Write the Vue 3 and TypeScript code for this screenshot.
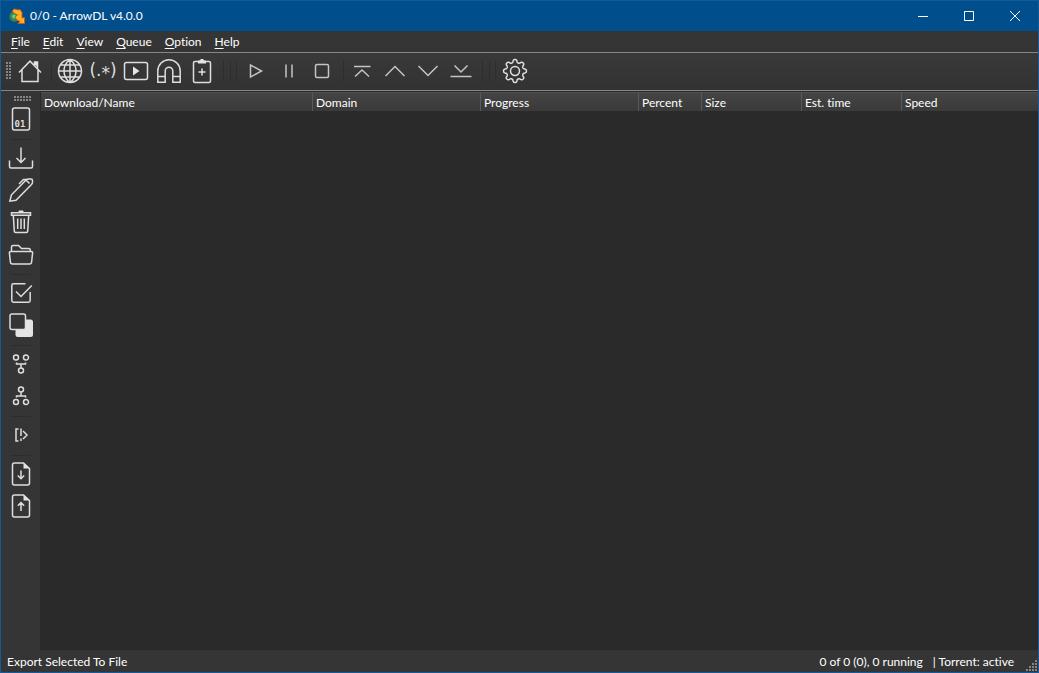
<script setup lang="ts">
interface Tool { name: string; label: string }
interface Column { title: string; cls: string }

const menus = [
  { key: 'F', rest: 'ile' },
  { key: 'E', rest: 'dit' },
  { key: 'V', rest: 'iew' },
  { key: 'Q', rest: 'ueue' },
  { key: 'O', rest: 'ption' },
  { key: 'H', rest: 'elp' },
]

const topTools: Tool[] = [
  { name: 'home', label: 'Home' },
  { name: 'sep', label: '' },
  { name: 'globe', label: 'Download web page content' },
  { name: 'regex', label: 'Download batch' },
  { name: 'video', label: 'Download video' },
  { name: 'magnet', label: 'Download torrent' },
  { name: 'clipboard', label: 'Paste URLs' },
  { name: 'break', label: '' },
  { name: 'play', label: 'Resume' },
  { name: 'pause', label: 'Pause' },
  { name: 'stop', label: 'Cancel' },
  { name: 'sep', label: '' },
  { name: 'top', label: 'Move to top' },
  { name: 'up', label: 'Move up' },
  { name: 'down', label: 'Move down' },
  { name: 'bottom', label: 'Move to bottom' },
  { name: 'break', label: '' },
  { name: 'gear', label: 'Preferences' },
]

const sideTools: Tool[] = [
  { name: 'info', label: 'Information' },
  { name: 'sep', label: '' },
  { name: 'download', label: 'Open file' },
  { name: 'pencil', label: 'Rename file' },
  { name: 'trash', label: 'Delete file' },
  { name: 'folder', label: 'Open directory' },
  { name: 'sep', label: '' },
  { name: 'check', label: 'Select all' },
  { name: 'invert', label: 'Invert selection' },
  { name: 'sep', label: '' },
  { name: 'merge', label: 'One more segment' },
  { name: 'split', label: 'One fewer segment' },
  { name: 'sep', label: '' },
  { name: 'limit', label: 'Speed limit' },
  { name: 'sep', label: '' },
  { name: 'import', label: 'Import from file' },
  { name: 'export', label: 'Export selected to file' },
]

const columns: Column[] = [
  { title: 'Download/Name', cls: 'c-name' },
  { title: 'Domain', cls: 'c-domain' },
  { title: 'Progress', cls: 'c-progress' },
  { title: 'Percent', cls: 'c-percent' },
  { title: 'Size', cls: 'c-size' },
  { title: 'Est. time', cls: 'c-time' },
  { title: 'Speed', cls: 'c-speed' },
]

// Closed outline of an eight-toothed wheel around (16, 16)
const gearPath = (() => {
  const pts: string[] = []
  for (let i = 0; i < 160; i++) {
    const a = (i / 160) * Math.PI * 2
    const r = 10 + 1.5 * Math.tanh(1.8 * Math.cos(8 * a))
    pts.push(`${(16 + r * Math.sin(a)).toFixed(2)} ${(16 - r * Math.cos(a)).toFixed(2)}`)
  }
  return `M${pts.join('L')}Z`
})()

const paths: Record<string, string> = {
  home: 'M5 17.5L16 6.2 27 17.5M8 15v11.5h16V15M20.5 10V7h3v6.5',
  globe: 'M16 4.5a11.5 11.5 0 1 0 0 23a11.5 11.5 0 1 0 0-23zM16 4.5v23M4.5 16h23M16 4.5c-8 6-8 17 0 23M16 4.5c8 6 8 17 0 23M6.5 10h19M6.5 22h19',
  video: 'M6.5 7.5h19a2 2 0 0 1 2 2v13a2 2 0 0 1-2 2h-19a2 2 0 0 1-2-2v-13a2 2 0 0 1 2-2z',
  magnet: 'M4.8 27.2V16a11.2 11.2 0 0 1 22.4 0v11.2h-7.4V16a3.8 3.8 0 0 0-7.6 0v11.2zM4.8 21.5h7.4M19.8 21.5h7.4',
  clipboard: 'M9 6.5h14a1.5 1.5 0 0 1 1.5 1.5v18a1.5 1.5 0 0 1-1.5 1.5H9A1.5 1.5 0 0 1 7.5 26V8A1.5 1.5 0 0 1 9 6.5zM16 13.5v7M12.5 17h7',
  play: 'M10.5 10v12l11-6z',
  pause: 'M13 9.5v13M19 9.5v13',
  stop: 'M11 9.5h10a1.5 1.5 0 0 1 1.5 1.5v10a1.5 1.5 0 0 1-1.5 1.5H11A1.5 1.5 0 0 1 9.5 21V11A1.5 1.5 0 0 1 11 9.5z',
  top: 'M8 11.5h16.5M9 21.5l7-6.5 7 6.5',
  up: 'M6.5 21L16 11.5l9.5 9.5',
  down: 'M6.5 11l9.5 9.5 9.5-9.5',
  bottom: 'M5.5 21.5h21M9.5 10.5l6.5 6.5 6.5-6.5',
  info: 'M9.5 5h13a2 2 0 0 1 2 2v18a2 2 0 0 1-2 2h-13a2 2 0 0 1-2-2V7a2 2 0 0 1 2-2z',
  download: 'M16 5.5v15M11.5 16l4.5 4.5 4.5-4.5M4.5 18.5v6a1.5 1.5 0 0 0 1.5 1.5h20a1.5 1.5 0 0 0 1.5-1.5v-6',
  pencil: 'M4.8 27.2L6.5 20.8 20.8 6.2Q21.8 5 23.5 5h2.5Q27.5 5 27.5 6.5v1.8q0 1.2-1 2.2L11 26.2zM24.5 9.5L20.5 5.5H18.5L14 10',
  trash: 'M6.5 6.8h19v2.5h-19zM8.3 9.3l1 16q0 1.2 1.5 1.2h10.4q1.5 0 1.5-1.2l1-16M12.7 12.5v10.5M16 12.5v10.5M19.3 12.5v10.5',
  folder: 'M6.5 13V9q0-1.5 1.5-1.5h5.5l3 3h7q1.8 0 1.8 1.5v1.5M5.8 13.5h20.4q1.5 0 1.4 1.5l-1 9q-.2 2-2 2H7.5q-1.9 0-2.1-2l-1-9q-.1-1.5 1.4-1.5z',
  check: 'M20.5 6.8H8.5Q6.8 6.8 6.8 8.5v15q0 1.7 1.7 1.7h15q1.7 0 1.7-1.7V15M11 14.5l5 5L26.8 8.5',
  merge: 'M8.5 9.5a2.5 2.5 0 1 0 5 0a2.5 2.5 0 1 0-5 0zM18.5 9.5a2.5 2.5 0 1 0 5 0a2.5 2.5 0 1 0-5 0zM13.5 22.5a2.5 2.5 0 1 0 5 0a2.5 2.5 0 1 0-5 0zM11.5 14.5v1.5h9v-1.5M16 16v4',
  split: 'M8.5 22a2.5 2.5 0 1 0 5 0a2.5 2.5 0 1 0-5 0zM18.5 22a2.5 2.5 0 1 0 5 0a2.5 2.5 0 1 0-5 0zM13.5 9.5a2.5 2.5 0 1 0 5 0a2.5 2.5 0 1 0-5 0zM11.5 17.5v-1.5h9v1.5M16 16v-4',
  limit: 'M13.5 10h-2.5v12h2.5M16 9.5v7.5M16 19.5v2.5M18 12l4 4-4 4',
  import: 'M18.5 5H9.5Q7.5 5 7.5 7v18Q7.5 27 9.5 27h13q2 0 2-2V10.5zM16 12.5v8M12.8 17.5l3.2 3.2 3.2-3.2',
  export: 'M18.5 5H9.5Q7.5 5 7.5 7v18Q7.5 27 9.5 27h13q2 0 2-2V10.5zM16 21v-8M12.8 15.8l3.2-3.2 3.2 3.2',
  gear: gearPath + 'M16 11.5a4.5 4.5 0 1 0 0 9a4.5 4.5 0 1 0 0-9z',
}

const fills: Record<string, string> = {
  home: 'M20.5 7h3v5l-3-2.5z',
  video: 'M13 11.5v9l6.5-4.5z',
  clipboard: 'M12 8.5V5.5h2l.8-1.5h2.4l.8 1.5h2v3z',
  trash: 'M13 6.5l1-2h4l1 2z',
  import: 'M18.5 5v5.5h6z',
  export: 'M18.5 5v5.5h6z',
}

const dim = new Set(['play', 'pause', 'stop', 'top', 'up', 'down', 'bottom'])
</script>

<template>
  <div class="window">
    <header class="titlebar">
      <svg class="logo" viewBox="0 0 16 16" aria-hidden="true">
        <circle cx="5.5" cy="8.5" r="4.8" fill="#179a58" stroke="#8a5a30" />
        <circle cx="5" cy="8.5" r="2" fill="#5fd08f" />
        <path d="M3.5 2.5l2-1.5L9 2l2-.5 2 3V10l2.500-.5v6H9l2-2Q7 12.500 6 9L8.500 7 4 4.500z" fill="#ffb524" stroke="#d8501c" />
      </svg>
      <h1>0/0 - ArrowDL v4.0.0</h1>
      <div class="controls">
        <button type="button" aria-label="Minimize"><svg viewBox="0 0 10 10"><path d="M0 5.5h10" /></svg></button>
        <button type="button" aria-label="Maximize"><svg viewBox="0 0 10 10"><path d="M.5.5h9v9h-9z" /></svg></button>
        <button type="button" aria-label="Close"><svg viewBox="0 0 10 10"><path d="M0 0l10 10M10 0L0 10" /></svg></button>
      </div>
    </header>

    <nav class="menubar">
      <button v-for="m in menus" :key="m.key" type="button"><u>{{ m.key }}</u>{{ m.rest }}</button>
    </nav>

    <div class="toolbar" role="toolbar" aria-label="Downloads">
      <span class="grip grip-v"></span>
      <template v-for="(t, i) in topTools" :key="i">
        <span v-if="t.name === 'sep'" class="sep"></span>
        <span v-else-if="t.name === 'break'" class="break"><i></i><i></i><i></i></span>
        <button v-else type="button" class="tool" :class="{ dim: dim.has(t.name) }" :aria-label="t.label">
          <svg viewBox="0 0 32 32">
            <text v-if="t.name === 'regex'" class="regex" x="16" y="21" text-anchor="middle">(.<tspan dy="3">*</tspan><tspan dy="-3">)</tspan></text>
            <path v-else :class="t.name" :d="paths[t.name]" />
            <path v-if="fills[t.name]" class="solid" :d="fills[t.name]" />
          </svg>
        </button>
      </template>
    </div>

    <div class="body">
      <div class="sidebar" role="toolbar" aria-label="File actions" aria-orientation="vertical">
        <span class="grip grip-h"></span>
        <template v-for="(t, i) in sideTools" :key="i">
          <span v-if="t.name === 'sep'" class="hsep"></span>
          <button v-else type="button" class="tool" :aria-label="t.label">
            <svg viewBox="0 0 32 32">
              <template v-if="t.name === 'invert'">
                <rect class="solid" x="10.5" y="10.5" width="17.5" height="17.5" rx="2.5" />
                <rect class="front" x="5" y="5" width="15.5" height="15.5" rx="2" />
              </template>
              <path v-else :class="t.name" :d="paths[t.name]" />
              <text v-if="t.name === 'info'" class="digits" x="15" y="24" text-anchor="middle">01</text>
              <path v-if="fills[t.name]" class="solid" :d="fills[t.name]" />
            </svg>
          </button>
        </template>
      </div>
      <main class="queue">
        <table>
          <colgroup><col v-for="c in columns" :key="c.cls" :class="c.cls"></colgroup>
          <thead>
            <tr><th v-for="c in columns" :key="c.cls" scope="col">{{ c.title }}</th></tr>
          </thead>
          <tbody></tbody>
        </table>
      </main>
    </div>

    <footer class="statusbar">
      <span class="message">Export Selected To File</span>
      <span>0 of 0 (0), 0 running</span>
      <span class="torrent">| Torrent: active</span>
      <svg class="resize" viewBox="0 0 12 12" aria-hidden="true">
        <path d="M9 0h2v2H9zM6 3h2v2H6zM9 3h2v2H9zM3 6h2v2H3zM6 6h2v2H6zM9 6h2v2H9zM0 9h2v2H0zM3 9h2v2H3zM6 9h2v2H6zM9 9h2v2H9z" />
      </svg>
    </footer>
  </div>
</template>

<style>
body { margin: 0; background: #2a2a2a; }
</style>

<style scoped>
.window {
  box-sizing: border-box;
  min-height: 100vh;
  display: flex;
  flex-direction: column;
  border: 1px solid #135a9a;
  background: #353535;
  color: #fff;
  font-family: Lato, "Open Sans", sans-serif;
  font-size: 12px;
  font-variant-ligatures: none;
  line-height: 16px;
}
button {
  border: 0;
  padding: 0;
  background: none;
  color: inherit;
  font: inherit;
  font-variant-ligatures: none;
}
button:hover { background: #ffffff1a; }
svg { display: block; }

.titlebar {
  display: flex;
  align-items: center;
  height: 30px;
  padding-left: 8px;
  background: #004e8c;
}
.logo { width: 16px; height: 16px; margin-right: 5px; }
h1 { flex: 1; margin: 0; font-size: 12px; font-weight: 400; }
.controls { display: flex; align-self: stretch; }
.controls button { width: 46px; display: grid; place-items: center; }
.controls svg { width: 10px; height: 10px; fill: none; stroke: #fff; }

.menubar {
  display: flex;
  height: 21px;
  padding-left: 3px;
  border-bottom: 1px solid #868686;
}
.menubar button { padding: 0 6px 0 7px; }
.menubar u { text-underline-offset: 2px; }

.toolbar {
  display: flex;
  align-items: center;
  gap: 1px;
  height: 35px;
  padding: 0 0 2px 5px;
  border-bottom: 1px solid #868686;
  background: linear-gradient(#393939, #323232);
}
.grip {
  background: repeating-linear-gradient(90deg, #0000 0 2px, #363636 2px 3px),
    repeating-linear-gradient(#858585 0 2px, #363636 2px 3px);
}
.grip-v { width: 5px; height: 17px; margin-right: 2px; }
.tool { flex: none; width: 32px; height: 32px; border-radius: 2px; }
.tool svg { width: 32px; height: 32px; fill: none; stroke: #dedede; stroke-width: 1.5; }
.tool.dim svg { stroke: #c4c4c4; }
.tool .solid { fill: #e4e4e4; stroke: none; }
.tool .front { fill: #353535; }
.tool text { fill: #dedede; stroke: none; }
.regex { font-family: "DejaVu Sans", sans-serif; font-size: 17px; }
.digits { font-family: "DejaVu Sans Mono", monospace; font-size: 9px; font-weight: 700; }
.sep { width: 6px; height: 20px; background: linear-gradient(#2d2d2d, #2d2d2d) 4px 0 / 1px 100% no-repeat; }
.break {
  box-sizing: border-box;
  display: flex;
  justify-content: space-between;
  width: 20px;
  height: 20px;
  padding: 0 2px 0 4px;
}
.break i { width: 1px; background: #2d2d2d; }

.body { flex: 1; display: flex; }
.sidebar {
  flex: none;
  display: flex;
  flex-direction: column;
  align-items: center;
  width: 39px;
  padding-top: 5px;
}
.grip-h { width: 17px; height: 5px; margin: 0 0 2px 4px; }
.sidebar .tool { margin-left: 1px; }
.hsep { width: 20px; height: 7px; background: linear-gradient(#2d2d2d, #2d2d2d) 0 4px / 100% 1px no-repeat; }

.queue { flex: 1; min-width: 0; padding: 1px 0 0 1px; background: #2a2a2a; }
table { width: 100%; table-layout: fixed; border-collapse: separate; border-spacing: 0; }
th {
  box-sizing: border-box;
  height: 19px;
  padding: 1px 3px 0;
  border-right: 1px solid #5a5a5a;
  border-top: 1px solid #4f4f4f;
  background: linear-gradient(#444, #3a3a3a);
  font-weight: 400;
  text-align: left;
  white-space: nowrap;
}
th:last-child { border-right: 0; }
.c-name { width: 272px; }
.c-domain { width: 168px; }
.c-progress { width: 158px; }
.c-percent { width: 63px; }
.c-size, .c-time { width: 100px; }

.statusbar {
  box-sizing: border-box;
  display: flex;
  align-items: center;
  height: 22px;
  padding: 2px 0 0 6px;
}
.message { flex: 1; }
.torrent { margin: 0 12px 0 10px; }
.resize { width: 12px; height: 12px; align-self: flex-end; fill: #858585; }
</style>
